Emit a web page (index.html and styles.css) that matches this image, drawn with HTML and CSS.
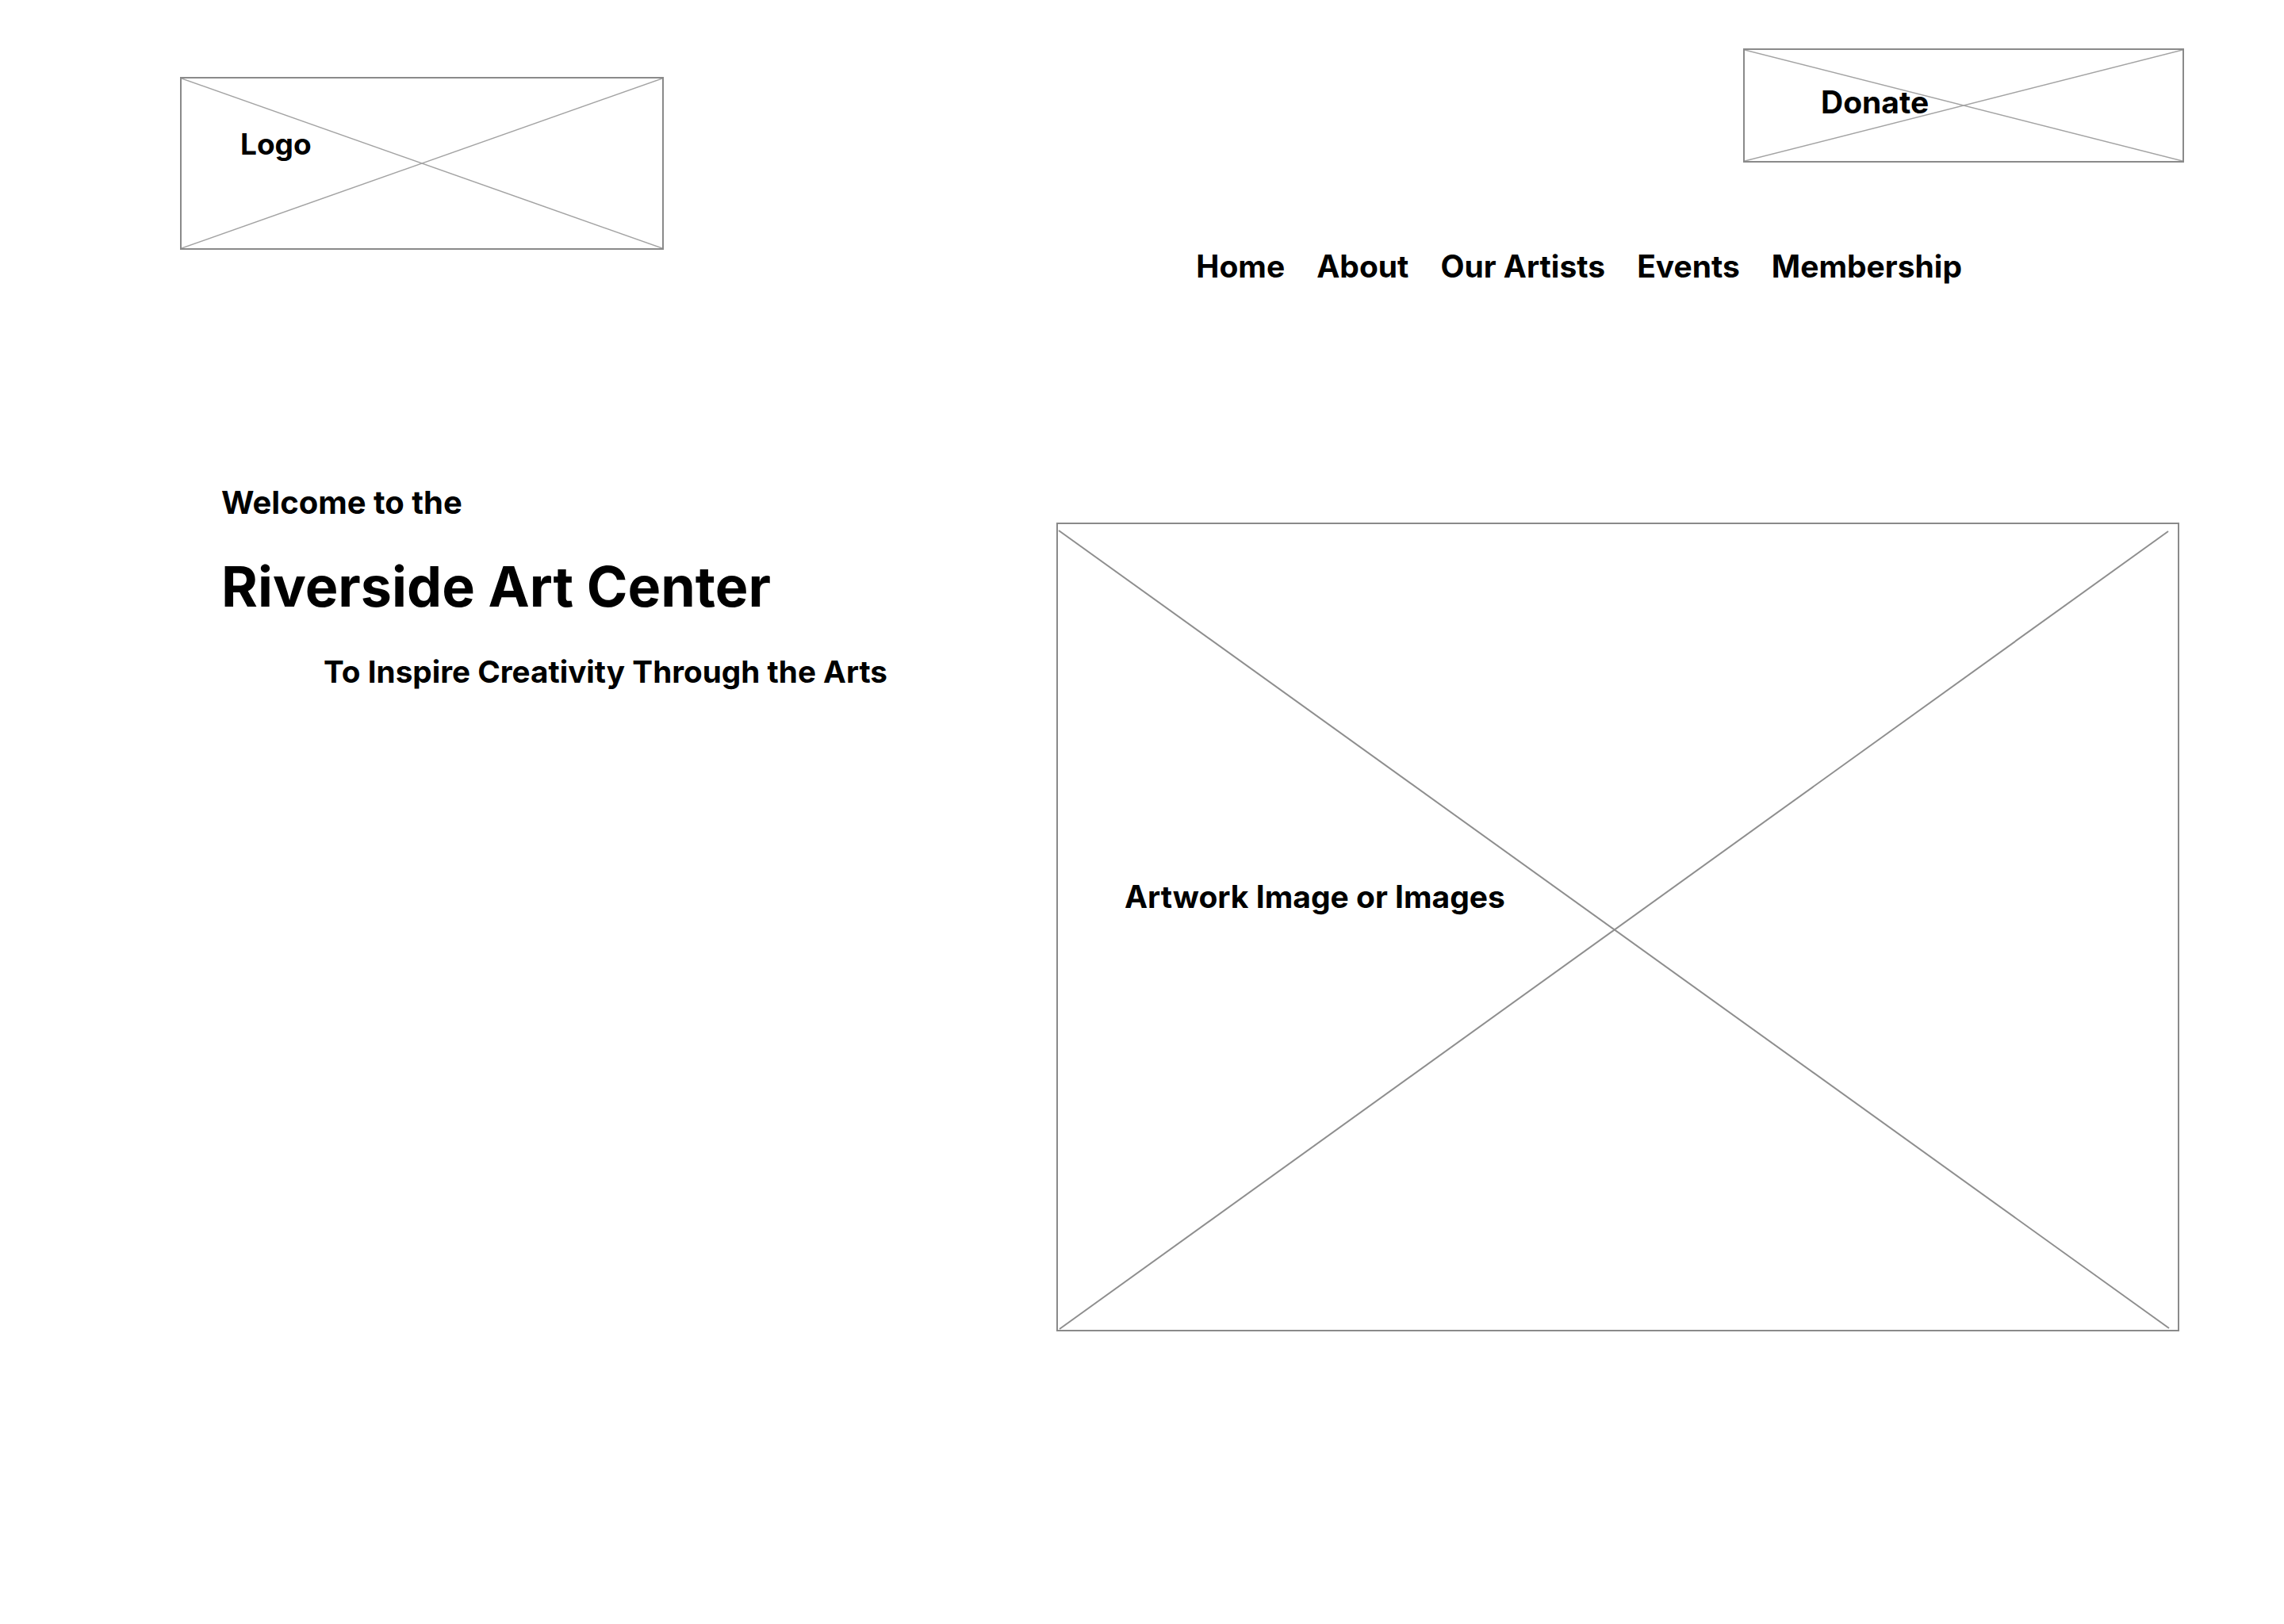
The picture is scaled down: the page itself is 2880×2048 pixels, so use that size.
FILE: index.html
```html
<!DOCTYPE html>
<html lang="en">
<head>
    <meta charset="UTF-8" />
    <meta name="viewport" content="width=device-width, initial-scale=1.0"/>
    <title>Riverside Art Center</title>
    <link rel="stylesheet" href="styles.css">
</head>
<body>

<header class="site-header">
    <div class="placeholder logo-box">
        <svg class="cross" viewBox="0 0 100 100" preserveAspectRatio="none">
            <line x1="0" y1="0" x2="100" y2="100" />
            <line x1="0" y1="100" x2="100" y2="0" />
        </svg>
        <span class="box-label">Logo</span>
    </div>

    <div class="header-right">
        <a class="placeholder donate-box" href="#">
            <svg class="cross" viewBox="0 0 100 100" preserveAspectRatio="none">
                <line x1="0" y1="0" x2="100" y2="100" />
                <line x1="0" y1="100" x2="100" y2="0" />
            </svg>
            <span class="box-label">Donate</span>
        </a>

        <nav class="main-nav">
            <a href="#">Home</a>
            <a href="#">About</a>
            <a href="#">Our Artists</a>
            <a href="#">Events</a>
            <a href="#">Membership</a>
        </nav>
    </div>
</header>

<main class="hero">
    <div class="hero-text">
        <p class="welcome">Welcome to the</p>
        <h1>Riverside Art Center</h1>
        <p class="tagline">To Inspire Creativity Through the Arts</p>
    </div>

    <div class="placeholder artwork-box">
        <!-- Platzhalter-Kreuz, leicht eingerückt wie im Entwurf -->
        <svg class="cross big" viewBox="0 0 1416 1020" preserveAspectRatio="none">
            <line x1="1" y1="8" x2="1405" y2="1018" />
            <line x1="2" y1="1019" x2="1404" y2="9" />
        </svg>
        <span class="box-label">Artwork Image or Images</span>
    </div>
</main>

</body>
</html>
```

FILE: styles.css
```css
body {
    margin: 0;
    font-family: Inter, "Liberation Sans", sans-serif;
    font-weight: 700;
    color: #000;
    background: #fff;
}

a {
    color: #000;
    text-decoration: none;
}

/* Kopfbereich */
.site-header {
    display: flex;
    justify-content: space-between;
    align-items: flex-start;
    padding: 61px 126px 0 227px;
}

.placeholder {
    position: relative;
    box-sizing: border-box;
    border: 2px solid #8a8a8a;
    display: block;
}

.cross {
    position: absolute;
    left: 0;
    top: 0;
    width: 100%;
    height: 100%;
}
.cross line {
    stroke: #a3a3a3;
    stroke-width: 1.5;
    vector-effect: non-scaling-stroke;
}
.cross.big line {
    stroke: #8e8e8e;
    stroke-width: 2;
}

.box-label {
    position: relative;
    display: block;
    font-size: 39px;
    line-height: 48px;
}

.logo-box {
    width: 610px;
    height: 218px;
    margin-top: 36px;
    padding: 59px 0 0 74px;
}
.logo-box .box-label {
    font-size: 37px;
}

.header-right {
    display: flex;
    flex-direction: column;
    align-items: flex-end;
}

.donate-box {
    width: 556px;
    height: 144px;
    padding: 42px 0 0 96px;
}

.main-nav {
    display: flex;
    gap: 40px;
    margin-top: 107px;
    margin-right: 280px;
    font-size: 39px;
    line-height: 48px;
}

/* Hauptbereich */
.hero {
    display: flex;
    align-items: flex-start;
    margin-top: 250px;
    padding-left: 279px;
}

.hero-text {
    width: 1053px;
    flex-shrink: 0;
}

.welcome {
    margin: 0;
    font-size: 40px;
    line-height: 48px;
}

.hero-text h1 {
    margin: 42px 0 0;
    font-size: 70px;
    line-height: 80px;
    font-weight: 700;
}

.tagline {
    margin: 43px 0 0;
    padding-left: 129px;
    font-size: 38.7px;
    line-height: 48px;
}

.artwork-box {
    width: 1416px;
    height: 1020px;
    margin-top: 49px;
    padding: 446px 0 0 84px;
}
.artwork-box .box-label {
    font-size: 39px;
}
```
